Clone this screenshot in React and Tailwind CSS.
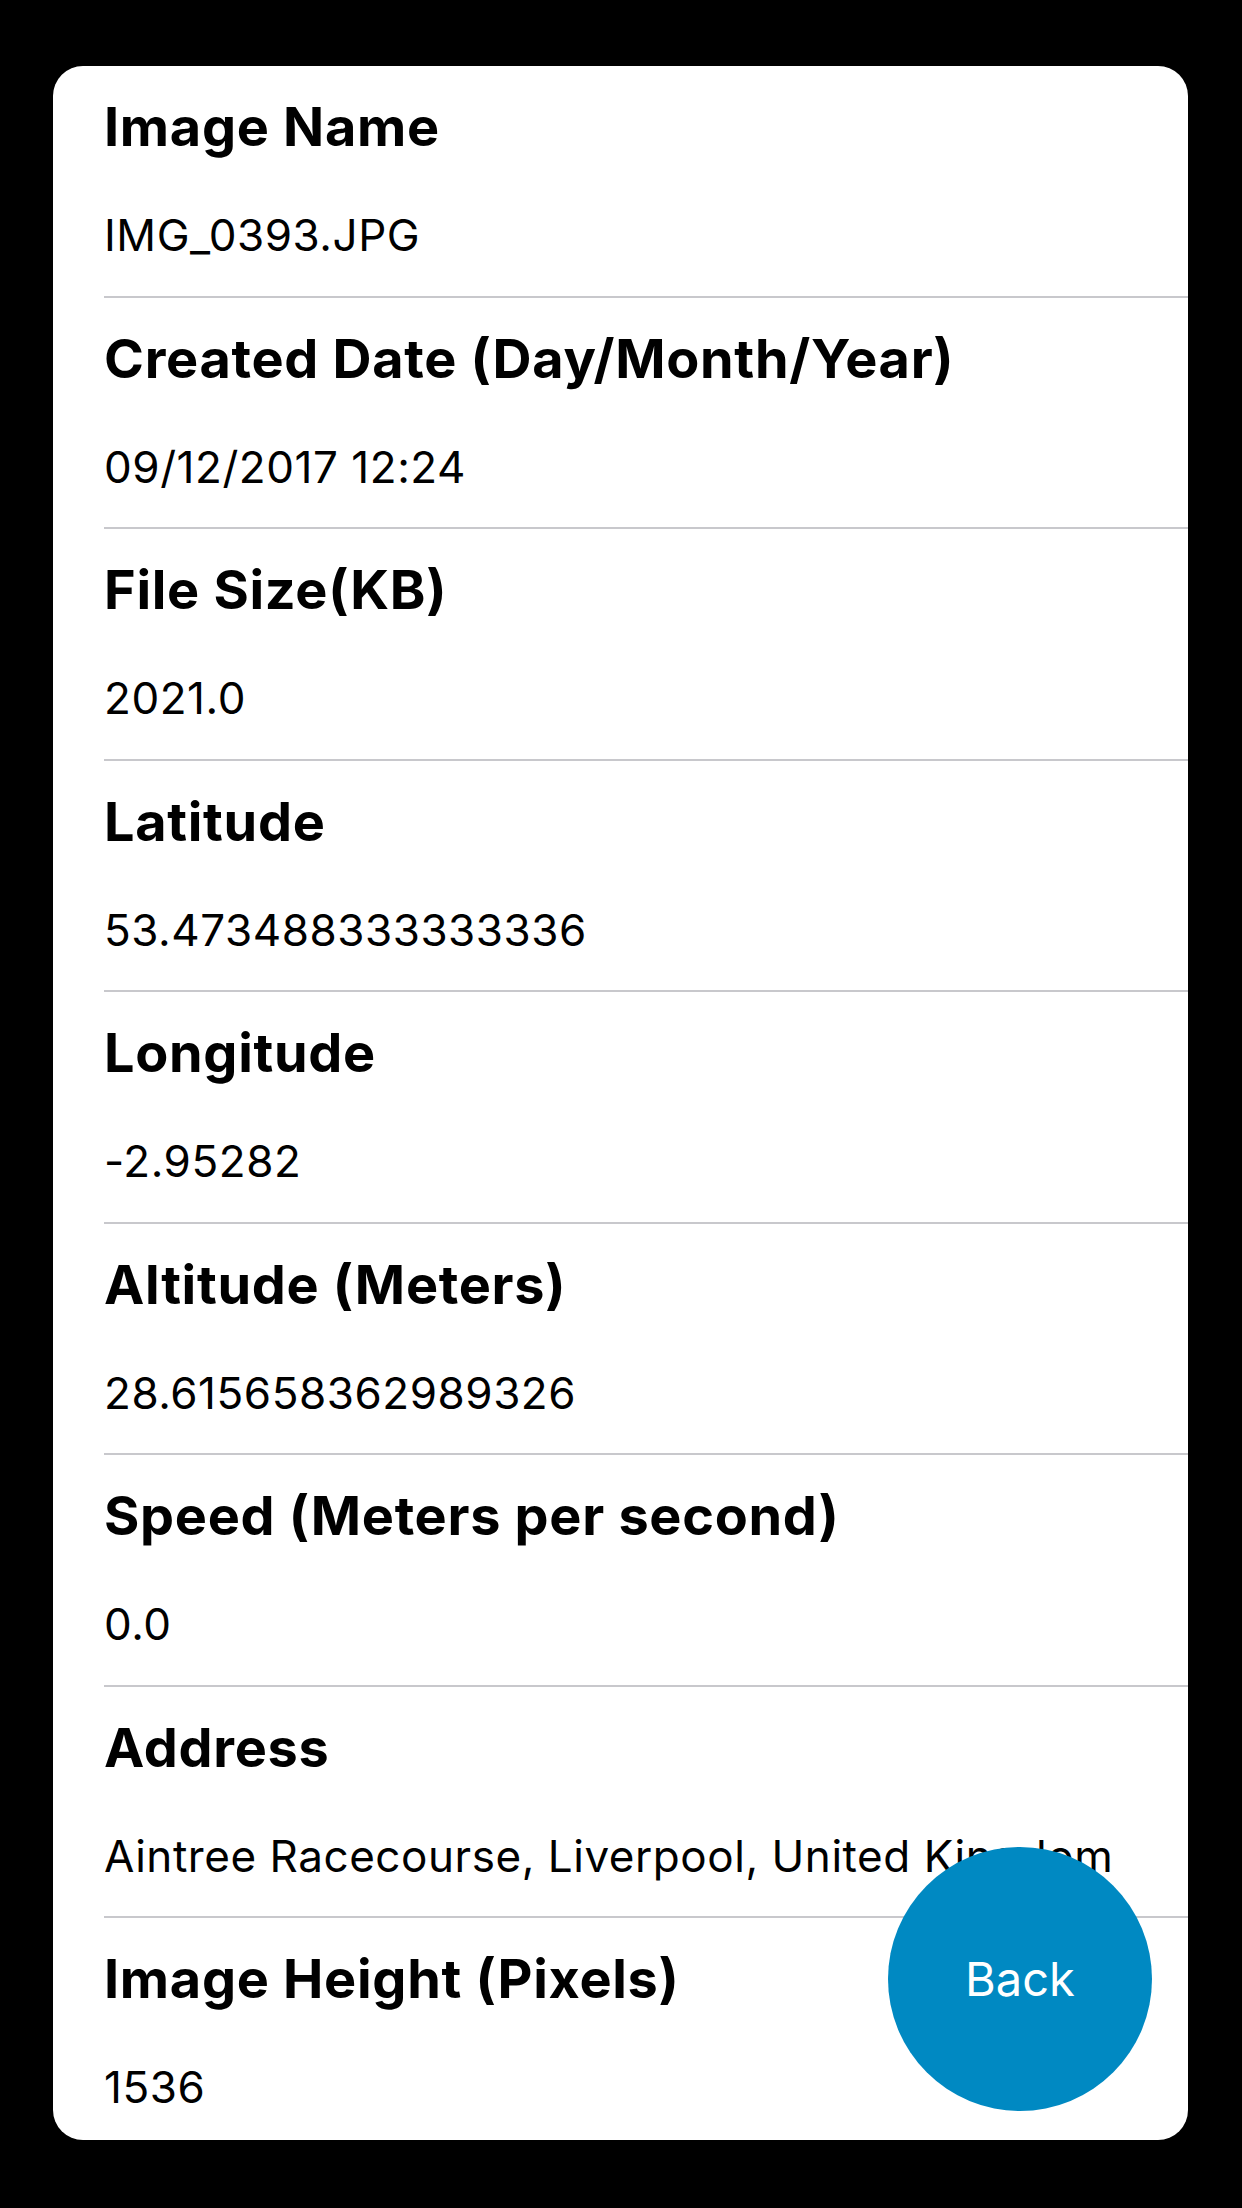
import React from 'react';

const details = [
  { label: 'Image Name', value: 'IMG_0393.JPG' },
  { label: 'Created Date (Day/Month/Year)', value: '09/12/2017 12:24' },
  { label: 'File Size(KB)', value: '2021.0' },
  { label: 'Latitude', value: '53.473488333333336' },
  { label: 'Longitude', value: '-2.95282' },
  { label: 'Altitude (Meters)', value: '28.615658362989326' },
  { label: 'Speed (Meters per second)', value: '0.0' },
  { label: 'Address', value: 'Aintree Racecourse, Liverpool, United Kingdom' },
  { label: 'Image Height (Pixels)', value: '1536' },
];

const DetailRow = ({ label, value }) => {
  return (
    <div className="ml-[51px] h-[231.5px] shrink-0 border-b-2 border-[#c8c8cc] flex flex-col">
      <p className="pt-[34px] text-[54px] leading-[54px] font-bold tracking-[0.7px] text-black whitespace-nowrap">{label}</p>
      <p className="mt-[59px] text-[44px] leading-[44px] tracking-[0.55px] text-black whitespace-nowrap">{value}</p>
    </div>
  );
};

export default function App() {
  return (
    <div
      className="w-full h-[2208px] bg-black pt-[66px] pl-[53px] pr-[54px]"
      style={{ fontFamily: 'Inter, "Noto Sans", sans-serif' }}
    >
      <div className="relative h-[2074px] bg-white rounded-[30px] overflow-hidden">
        <div className="flex flex-col">
          {details.map((item) => (
            <DetailRow key={item.label} label={item.label} value={item.value} />
          ))}
        </div>
        <button
          type="button"
          className="absolute right-[36px] bottom-[29px] w-[264px] h-[264px] rounded-full bg-[#0089c2] text-white text-[47px] flex items-center justify-center"
        >
          Back
        </button>
      </div>
    </div>
  );
}
